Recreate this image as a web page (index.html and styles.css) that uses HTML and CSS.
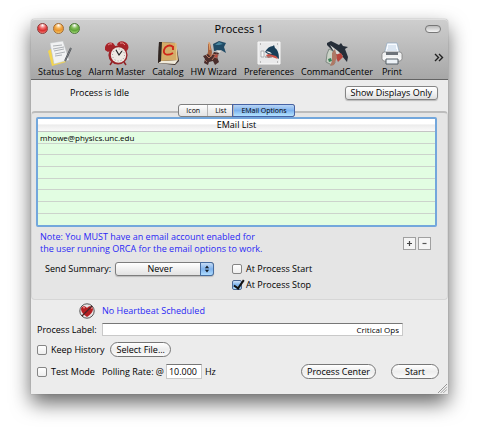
FILE: index.html
```html
<!DOCTYPE html>
<html lang="en">
<head>
<meta charset="utf-8">
<title>Process 1</title>
<link rel="stylesheet" href="styles.css">
</head>
<body>
<main class="window">
  <header class="chrome">
    <div class="titlebar">
      <div class="lights">
        <button class="light red" aria-label="Close"></button>
        <button class="light amber" aria-label="Minimize"></button>
        <button class="light green" aria-label="Zoom"></button>
      </div>
      <h1>Process 1</h1>
      <button class="pill" aria-label="Toggle toolbar"></button>
    </div>
    <nav class="toolbar">
      <button class="tool">
        <svg viewBox="0 0 24 25"><path d="M0 10 3 8l3 14 11-3 1 2-14 4z" fill="#f3d54e"/><path d="M2 2 15 0l6 19-15 4z" fill="#f1f2f3" stroke="#bfc2c5" stroke-width=".5"/><path d="m5 5 9-1M5 8l11-2M6 10l10-2M7 13l10-2M7 15l7-1" stroke="#9b9fa5" stroke-width=".8"/><path d="m17 20 6-13" stroke="#42464b" stroke-width="1.8"/><path d="m17 20 6-13" stroke="#b3b8bd" stroke-width=".5"/></svg>
        <span>Status Log</span>
      </button>
      <button class="tool">
        <svg viewBox="0 0 24 25"><path d="m7 21-2 3M19 21l2 3" stroke="#8d2427" stroke-width="1.5"/><path d="M0 9C-1 3 4 0 8 2l3 4-8 5z" fill="#a82328"/><path d="M12 4c1-5 8-5 11 0 1 3 0 5-2 6z" fill="#a82328"/><path d="M3 4q2-2 4-1M15 2q3-1 5 2" stroke="#e88f8e" fill="none"/><circle cx="13" cy="14" r="9.6" fill="#9b2428"/><circle cx="13.500" cy="14" r="7.700" fill="#eee9e3"/><circle cx="13.500" cy="14" r="6" fill="none" stroke="#777" stroke-dasharray=".7 2.400"/><path d="m11 9 3 5 3-4" stroke="#242424" fill="none" stroke-width="1.200"/></svg>
        <span>Alarm Master</span>
      </button>
      <button class="tool">
        <svg viewBox="0 0 24 25"><path d="m3 1 17 1 3 18-4 4L2 22z" fill="#3b2e29"/><path d="m5 20 17-1-3 4-17-1z" fill="#f0ead9"/><path d="m5 1 15 1 2 17-17 1z" fill="#d4ac68"/><path d="M3 1h3L5 20l-3 2z" fill="#302622"/><path d="m20 2 1 17" stroke="#ead19a"/><path d="M17 6C14 3 9 5 8 9c-1 5 4 6 9 3M17 5v4" fill="none" stroke="#cf2418" stroke-width="1.800"/></svg>
        <span>Catalog</span>
      </button>
      <button class="tool">
        <svg viewBox="0 0 24 25"><path d="M11 3 17 0l7 2-2 4 2 6-5-3-7 1z" fill="#204b66"/><path d="m13 4 4-3 4 2-4 1z" fill="#4886a1"/><path d="m14 9 5 1-2 2z" fill="#e7e7df"/><path d="m6 3 2-1 2 9-1 7-5-1 2-6z" fill="#a7623e"/><path d="m7 1 1 8" stroke="#e1a069" stroke-width="1.200"/><path d="m1 15 5-2 3 3 3-5 5 1-2 4 2 5-4 3-2-4-4 1-1 3-4-2 1-4z" fill="#4a2d2b"/><path d="m4 14 3 3 4-4 3 1-4 5" fill="none" stroke="#b67962"/><path d="m14 13 2 1-1 3-3-1zM3 19l2 2" fill="#c3443a" stroke="#9d685b"/></svg>
        <span>HW Wizard</span>
      </button>
      <button class="tool">
        <svg viewBox="0 0 24 25"><path d="M1 1h22v22H1z" fill="#e9e9ea" stroke="#f8f8f8"/><path d="M4 10h3v6H4z" fill="#f7f7f7" stroke="#929699" stroke-width=".7"/><path d="M8 11c2-4 5-6 8-6l1-1 1 3c3 2 4 6 4 11l-4-3-4 1-3-3z" fill="#193e58"/><path d="m12 13 7 2 2 3-6-2-4 1-2-3z" fill="#cc5146"/><path d="m9 10 4 1 2 2-4-1z" fill="#eee"/><path d="M8 16h7M3 3h1M20 3h1M3 21h1M20 21h1" stroke="#888"/></svg>
        <span>Preferences</span>
      </button>
      <button class="tool">
        <svg viewBox="0 0 24 25"><path d="M2 2 6 0l8 4 2-2 2 3 5 1-3 2 3 8-1 5-5-6-6 1-5-8-4-4z" fill="#262e39"/><path d="m5 4 8 6 5 5-6-1-4-5z" fill="#d8d9d6"/><path d="m10 14 6-2 2 4-5 5z" fill="#b7443c"/><path d="m4 8 4 2 2 12-3 2-6-3 1-8z" fill="#cbd3c7" stroke="#66736c" stroke-width=".7"/><path d="m7 12 3-4 2 8-3 8-4 1 2-5z" fill="#ae7966"/><path d="m3 18 3-1 1 3-3 1z" fill="#3d8058"/></svg>
        <span>CommandCenter</span>
      </button>
      <button class="tool">
        <svg viewBox="0 0 24 25"><path d="M7 2h10l3 12H4z" fill="#f8fbff" stroke="#8ea7c0" stroke-width=".7"/><path d="M8 5h8M8 7h8M7 9h10" stroke="#bfd1e4"/><rect x="2" y="11" width="20" height="9" rx="2.500" fill="#f0f1f2" stroke="#777" stroke-width=".7"/><path d="M6 11h12v3H6z" fill="#6d737a"/><path d="M3 17h18" stroke="#fff"/><path d="M6 18h12v5H6z" fill="#edf2f7" stroke="#555e67"/></svg>
        <span>Print</span>
      </button>
      <button class="more" aria-label="More tools"><svg viewBox="0 0 10 9"><path d="m1 1 3.500 3.500L1 8m4-7 3.500 3.500L5 8" fill="none" stroke="#222" stroke-width="1.400"/></svg></button>
    </nav>
  </header>

  <div class="status">
    <span>Process is Idle</span>
    <button class="square">Show Displays Only</button>
  </div>

  <section class="panel">
    <div class="tabs" role="tablist">
      <button role="tab">Icon</button>
      <button role="tab">List</button>
      <button role="tab" aria-selected="true">EMail Options</button>
    </div>
    <table class="emails">
      <thead><tr><th>EMail List</th></tr></thead>
      <tbody>
        <tr><td>mhowe@physics.unc.edu</td></tr>
        <tr><td></td></tr>
        <tr><td></td></tr>
        <tr><td></td></tr>
        <tr><td></td></tr>
        <tr><td></td></tr>
        <tr><td></td></tr>
        <tr><td></td></tr>
      </tbody>
    </table>
    <div class="note">
      <div class="lines">
        <p>Note: You MUST have an email account enabled for</p>
        <p>the user running ORCA for the email options to work.</p>
      </div>
      <div class="steppers">
        <button aria-label="Add"><svg viewBox="0 0 11 11"><path d="M3 5.500h5M5.500 3v5" stroke="#444" stroke-width="1.200"/></svg></button>
        <button aria-label="Remove"><svg viewBox="0 0 11 11"><path d="M3.500 5.500h4" stroke="#555" stroke-width="1.200"/></svg></button>
      </div>
    </div>
    <div class="summary">
      <label for="summary">Send Summary:</label>
      <div class="popup">
        <select id="summary"><option>Never</option></select>
        <svg viewBox="0 0 14 13"><path d="m4.500 5.500 2.500-3 2.500 3zM4.500 7.500l2.500 3 2.500-3z" fill="#16202c"/></svg>
      </div>
      <div class="checks">
        <label class="check"><input type="checkbox">At Process Start</label>
        <label class="check"><input type="checkbox" checked>At Process Stop</label>
      </div>
    </div>
  </section>

  <footer class="controls">
    <div class="heartbeat">
      <svg viewBox="0 0 16 16"><circle cx="8" cy="8" r="7.200" fill="#e8e5e5" stroke="#555"/><path d="M8 14C4 11 2 9 2 6c0-3 4-4 6-1 2-3 6-2 6 1 0 3-2 5-6 8z" fill="#b51f22"/><path d="M4 5q1-1 2 0M11 4q2 0 2 2" stroke="#f09a96" fill="none"/><path d="M3 13 13 3" stroke="#4b2526" stroke-width="1.300"/></svg>
      <span>No Heartbeat Scheduled</span>
    </div>
    <div class="row name">
      <label for="name">Process Label:</label>
      <input id="name" type="text" value="Critical Ops">
    </div>
    <div class="row history">
      <label class="check"><input type="checkbox">Keep History</label>
      <button class="round">Select File...</button>
    </div>
    <div class="row polling">
      <label class="check"><input type="checkbox">Test Mode</label>
      <label class="rate" for="rate">Polling Rate: @</label>
      <input id="rate" type="text" value="10.000">
      <span>Hz</span>
      <div class="actions">
        <button class="round">Process Center</button>
        <button class="round">Start</button>
      </div>
    </div>
    <svg class="grip" viewBox="0 0 10 10"><path d="m0 10L10 0M3 10l7-7M6 10l4-4" stroke="#888"/><path d="m1 10 9-9M4 10l6-6M7 10l3-3" stroke="#fff" stroke-width=".5"/></svg>
  </footer>
</main>
</body>
</html>
```

FILE: styles.css
```css
* { box-sizing: border-box; }
body {
  margin: 0;
  padding: 19px 30px 42px 31px;
  background: #fff;
  color: #000;
  font: 9px/12px "Open Sans", "Noto Sans", sans-serif;
  font-weight: 500;
}
button, input, select { font: inherit; color: inherit; margin: 0; padding: 0; }
button { border: 0; background: none; }
svg { display: block; }
.window {
  background: #ececec;
  border-radius: 4px 4px 0 0;
  box-shadow: 0 0 1px #666, 0 9px 20px rgba(0, 0, 0, .6);
}

.chrome {
  border-radius: 4px 4px 0 0;
  border-top: 1px solid #e0e0e0;
  border-bottom: 1px solid #646464;
  background: linear-gradient(#cecece, #a7a7a7);
}
.titlebar {
  display: grid;
  grid-template-columns: 1fr auto 1fr;
  align-items: center;
  height: 17px;
  padding: 0 7px 0 6px;
}
.titlebar h1 { margin: 0; font-size: 11px; font-weight: 500; }
.lights { display: flex; gap: 5px; }
.light {
  width: 11px;
  height: 11px;
  border: 1px solid;
  border-radius: 50%;
}
.red { border-color: #8e3a38; background: radial-gradient(circle at 50% 15%, #fff 0, #ee6a6a 35%, #d92e2e 60%, #ff9c94); }
.amber { border-color: #a26a31; background: radial-gradient(circle at 50% 15%, #fff 0, #f5b254 35%, #e8922c 60%, #ffe780); }
.green { border-color: #4d7a39; background: radial-gradient(circle at 50% 15%, #fff 0, #84bd5b 35%, #5ea537 60%, #c4f193); }
.pill {
  justify-self: end;
  width: 16px;
  height: 8px;
  border: 1px solid #777;
  border-radius: 4px;
  background: linear-gradient(#bbb, #f4f4f4);
}
.toolbar {
  display: flex;
  align-items: flex-start;
  gap: 7px;
  height: 42px;
  padding: 4px 4px 0 7px;
}
.tool { white-space: nowrap; }
.tool svg { width: 24px; height: 25px; margin: 0 auto; }
.tool span { display: block; }
.more { margin: 12px 0 0 auto; }
.more svg { width: 10px; height: 9px; }

.status {
  display: flex;
  align-items: center;
  justify-content: space-between;
  height: 25px;
  padding: 0 10px 0 39px;
}
.square {
  height: 14px;
  padding: 0 5px;
  line-height: 12px;
  border: 1px solid #858585;
  border-radius: 3px;
  background: linear-gradient(#fff, #f2f2f2 50%, #dedede);
  box-shadow: 0 1px 1px #bbb;
}

.panel {
  margin-top: 6px;
  padding: 0 10px 0 4px;
  border: 1px solid #d6d6d6;
  border-top: 2px solid #bcbcbc;
  border-radius: 4px;
  background: #e5e5e5;
}
.tabs {
  display: flex;
  width: max-content;
  height: 13px;
  margin: -9px auto 0;
  border: 1px solid #7e7e7e;
  border-radius: 3px;
  background: linear-gradient(#fff, #efefef 50%, #e4e4e4);
  font-size: 7px;
  line-height: 11px;
}
.tabs button { padding: 0 7px; line-height: 11px; }
.tabs button + button { border-left: 1px solid #b5b5b5; }
.tabs [aria-selected] {
  border-radius: 0 2px 2px 0;
  background: linear-gradient(#b9d5f5, #7db2ee 50%, #b4e4ff);
  box-shadow: 0 0 0 1px #4662a4;
}

.emails {
  width: 100%;
  border: 2px solid #73a7dc;
  border-radius: 2px;
  border-spacing: 0;
  background: #e2fde2;
}
.emails th {
  height: 13px;
  padding: 0;
  border-bottom: 1px solid #c4c4c4;
  background: linear-gradient(#fff, #fff 40%, #ececec 50%, #fafafa);
  font-weight: 500;
  line-height: 12px;
}
.emails td {
  height: 12px;
  padding: 0 2px;
  border-bottom: 1px solid #ccd3cc;
  font-size: 8px;
  line-height: 10px;
}
.emails tr:nth-child(3n + 2) td { height: 11px; }
.emails tr:last-child td { height: 11px; border-bottom: 0; }

.note {
  display: flex;
  justify-content: space-between;
  align-items: center;
  padding: 4px 6px 0 4px;
  color: #2a28f5;
}
.note p { margin: 0; line-height: 12px; }
.steppers { display: flex; gap: 2px; }
.steppers button {
  width: 13px;
  height: 13px;
  border: 1px solid #a0a0a0;
  background: #f4f4f4;
}
.steppers svg { width: 11px; height: 11px; }

.summary {
  display: flex;
  align-items: flex-start;
  padding: 7px 0 7px 9px;
  line-height: 14px;
}
.popup { position: relative; width: 99px; margin: 0 18px 0 4px; }
.popup select {
  appearance: none;
  display: block;
  width: 100%;
  height: 14px;
  padding-right: 9px;
  border: 1px solid #7d7d7d;
  border-radius: 3px;
  background: linear-gradient(#fff, #f0f0f0 50%, #e2e2e2);
  box-shadow: 0 1px 1px #bbb;
  line-height: 12px;
  text-align: center;
  text-align-last: center;
}
.popup svg {
  position: absolute;
  right: 0;
  top: 0;
  width: 14px;
  height: 14px;
  border: 1px solid #466c9f;
  border-radius: 0 3px 3px 0;
  background: linear-gradient(#c6dcf6, #7fb2ec 50%, #aedcff);
  pointer-events: none;
}
.checks { display: grid; gap: 2px; }
.check { display: flex; align-items: center; gap: 4px; }
.check input {
  appearance: none;
  width: 10px;
  height: 10px;
  border: 1px solid #858585;
  border-radius: 2px;
  background: linear-gradient(#fff, #eee);
}
.check input:checked {
  position: relative;
  border-color: #4b6793;
  background: linear-gradient(#cfe2f8, #76aeea 50%, #b2e0ff);
}
.check input:checked::after {
  content: "";
  position: absolute;
  left: 3px;
  top: -3px;
  width: 4px;
  height: 9px;
  border: solid #111;
  border-width: 0 2px 2px 0;
  transform: rotate(35deg);
}

.controls { position: relative; padding: 3px 9px 15px 6px; }
.heartbeat {
  display: flex;
  align-items: center;
  gap: 7px;
  padding-left: 42px;
  color: #2a28f5;
}
.heartbeat svg { width: 16px; height: 16px; }
.row { display: flex; align-items: center; }
.row input[type="text"] {
  border: 1px solid #c9c9c9;
  border-top-color: #777;
  background: #fff;
}
.name { margin-top: 4px; gap: 5px; }
.name input {
  flex: 1;
  min-width: 0;
  height: 13px;
  margin-right: 36px;
  padding: 0 3px;
  font-size: 8px;
  text-align: right;
}
.history { margin-top: 6px; gap: 6px; }
.polling { margin-top: 7px; }
.rate { margin: 0 2px 0 7px; }
.polling input[type="text"] { width: 36px; height: 15px; margin-right: 3px; padding: 0 2px; }
.round {
  height: 15px;
  padding: 0 5px;
  border: 1px solid #777;
  border-radius: 8px;
  background: linear-gradient(#fff, #ededed 50%, #fafafa);
  line-height: 13px;
}
.actions { display: flex; gap: 15px; margin-left: auto; }
.actions .round:last-child { padding: 0 13px; }
.grip { position: absolute; right: 1px; bottom: 1px; width: 9px; height: 9px; }
```
